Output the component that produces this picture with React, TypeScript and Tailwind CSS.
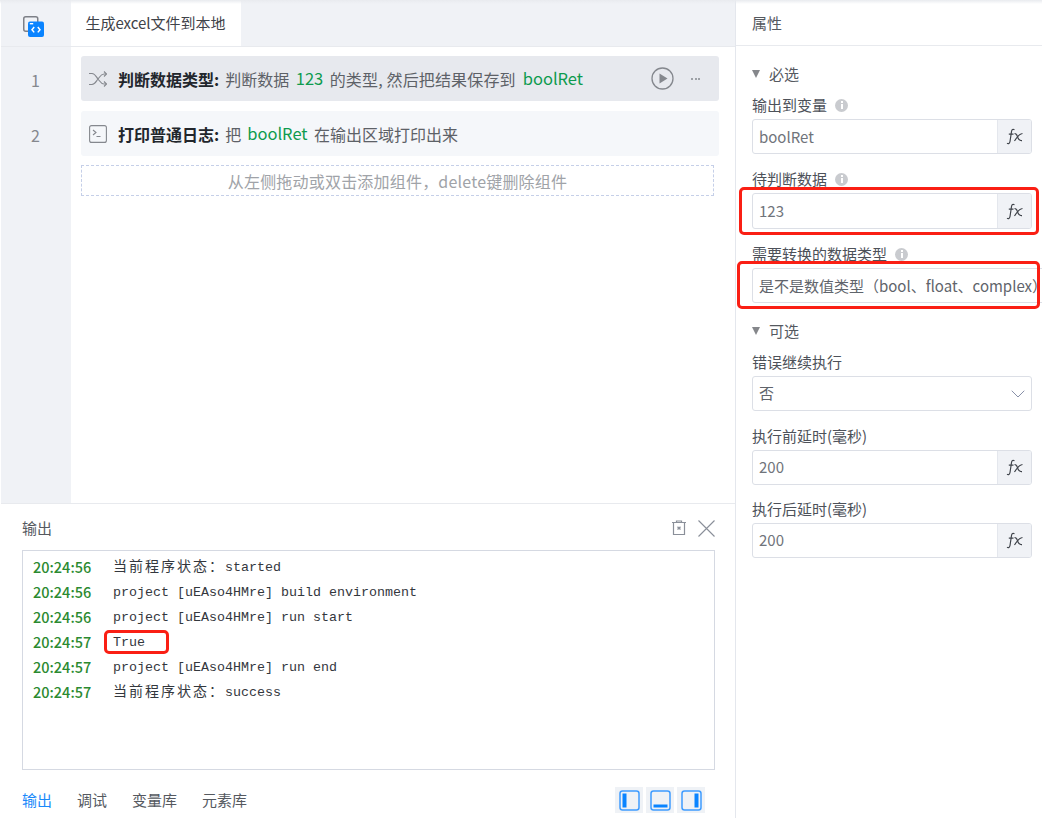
import React from "react";
import { ChevronDown } from "lucide-react";

const ui = { fontFamily: '"Noto Sans CJK SC", "Noto Sans", sans-serif' };

function Fx() {
  return (
    <div className="flex w-[34px] shrink-0 items-center justify-center self-stretch border-l border-[#e4e7ed] bg-[#f0f2f6] text-[#3f434a]">
      <svg width="18" height="17" viewBox="0 0 18 17" fill="none" stroke="currentColor" strokeWidth="1.200">
        <path d="M8.500 1.800C7 .9 5.900 1.500 5.500 3.500L4 13.500c-.4 2-1.500 2.600-3 1.800" />
        <path d="M2.800 6.200h4.700" />
        <path d="M8.500 5.500c2 0 2.400 1 3 3.200.7 2.500 1.500 4.300 4.500 3.900" />
        <path d="M16.500 5.500c-2.500.2-5.500 3.500-8 7.500" />
      </svg>
    </div>
  );
}

function Info() {
  return (
    <span className="ml-[8px] flex h-[13px] w-[13px] flex-col items-center justify-center gap-px rounded-full bg-[#c9cbcf]">
      <span className="h-[2px] w-[2px] bg-white" />
      <span className="h-[5px] w-[2px] bg-white" />
    </span>
  );
}

function Label({ text, info, className = "" }: { text: string; info?: boolean; className?: string }) {
  return (
    <div className={"flex h-[20px] items-center text-[15px] leading-[20px] text-[#4d5159] " + className}>
      {text}
      {info && <Info />}
    </div>
  );
}

function Field({ value, h = "h-[35px]", nudge = "" }: { value: string; h?: string; nudge?: string }) {
  return (
    <div className={"mr-[10px] mt-[4px] flex items-center overflow-hidden rounded-[3px] border border-[#dcdfe6] bg-white " + h}>
      <div className={"flex-1 pl-[6px] text-[15px] text-[#70747b] " + nudge}>{value}</div>
      <Fx />
    </div>
  );
}

function Section({ text }: { text: string }) {
  return (
    <div className="flex h-[20px] items-center text-[15px] text-[#55595f]">
      <span className="mr-[9px] h-0 w-0 border-x-[4.500px] border-t-[8px] border-x-transparent border-t-[#85878b]" />
      {text}
    </div>
  );
}

function Red({ className }: { className: string }) {
  return <div className={"pointer-events-none absolute rounded-[5px] border-[3px] border-[#fa1f14] " + className} />;
}

function Cjk({ children }: { children: React.ReactNode }) {
  return <span className="text-[14px] leading-[14px] tracking-[2px]" style={{ fontFamily: '"Noto Sans CJK SC", serif' }}>{children}</span>;
}

const logs: [string, React.ReactNode][] = [
  ["20:24:56", <><Cjk>当前程序状态：</Cjk>started</>],
  ["20:24:56", "project [uEAso4HMre] build environment"],
  ["20:24:56", "project [uEAso4HMre] run start"],
  ["20:24:57", "True"],
  ["20:24:57", "project [uEAso4HMre] run end"],
  ["20:24:57", <><Cjk>当前程序状态：</Cjk>success</>],
];

function Pane({ kind }: { kind: "l" | "b" | "r" }) {
  return (
    <div className="flex h-[26px] w-[28px] items-center justify-center bg-[#eff2f6]">
      <svg width="21" height="21" viewBox="0 0 21 21" fill="none">
        <rect x="1" y="1" width="19" height="19" rx="2.500" stroke="#3f9cff" strokeWidth="1.500" />
        {kind === "l" && <rect x="3.500" y="3.500" width="4" height="14" fill="#0a84ff" />}
        {kind === "b" && <rect x="3.500" y="14.500" width="14" height="3" fill="#0a84ff" />}
        {kind === "r" && <rect x="13.500" y="3.500" width="4" height="14" fill="#0a84ff" />}
      </svg>
    </div>
  );
}

export default function App() {
  return (
    <div className="relative flex h-[818px] w-[1042px] overflow-hidden bg-white" style={ui}>
      <div className="flex w-[735px] shrink-0 flex-col pl-px">
        <div className="flex h-[504px] shrink-0 flex-col border-b border-[#e8eaee]">
          <div className="flex h-[47px] shrink-0 border-b border-[#e8eaee] bg-[#f0f2f6]">
            <div className="flex w-[70px] items-start pl-[22px] pt-[16px]">
              <svg width="22" height="22" viewBox="0 0 22 22" fill="none">
                <rect x="0.750" y="0.750" width="14" height="14.500" rx="2" stroke="#7d8087" strokeWidth="1.500" />
                <rect x="5" y="5.500" width="16" height="15.500" rx="2" fill="#0a84ff" />
                <path d="M11.200 11 9 13.700l2.200 2.700M14.800 11l2.200 2.700-2.200 2.700" stroke="#fff" strokeWidth="1.500" />
                <rect x="6.800" y="7" width="3.400" height="1.400" fill="#fff" />
              </svg>
            </div>
            <div className="flex w-[170px] items-center justify-center bg-white pr-[1px] text-[15px] text-[#3f4349]">生成excel文件到本地</div>
          </div>
          <div className="flex flex-1">
            <div className="flex w-[70px] flex-col items-center bg-[#f0f2f6] pr-[1px] pt-[9px] text-[16px] text-[#85888e]">
              <div className="flex h-[45px] items-center pt-[3px]">1</div>
              <div className="mt-[10px] flex h-[45px] items-center pt-[3px]">2</div>
            </div>
            <div className="flex-1 pl-[10px] pr-[16px] pt-[9px] text-[16px]">
              <div className="flex h-[45px] items-center rounded-[3px] bg-[#e7e9ee] pl-[8px] text-[#5d6167]">
                <svg width="18" height="16" viewBox="0 0 18 16" fill="none" stroke="#85888e" strokeWidth="1.100">
                  <path d="M0 2.500h3c3 0 4 3 6 5.500s3 5 6 5h2.500M0 13.500h3c3 0 4-3 6-5.500s3-5 6-5h2.500" />
                  <path d="m15 0.500 2.500 2.500-2.500 2.500M15 10.500l2.500 2.500-2.500 2.500" />
                </svg>
                <b className="ml-[11px] mr-[6px] font-bold text-[#22262c]">判断数据类型:</b>
                判断数据
                <span className="mx-[6.500px] text-[16.500px] text-[#0e9b4e]">123</span>
                <span className="tracking-[0.150px]">的类型, 然后把结果保存到</span>
                <span className="ml-[7px] text-[16.500px] text-[#0e9b4e]">boolRet</span>
                <div className="ml-auto mr-[19px] flex items-center gap-[17px]">
                  <svg width="23" height="23" viewBox="0 0 23 23" fill="none">
                    <circle cx="11.500" cy="11.500" r="10.500" stroke="#85888e" strokeWidth="1.300" />
                    <path d="M8.500 6.500v10l8-5z" fill="#85888e" />
                  </svg>
                  <span className="flex gap-[1.500px]">
                    <i className="h-[2px] w-[2px] rounded-full bg-[#85888e]" />
                    <i className="h-[2px] w-[2px] rounded-full bg-[#85888e]" />
                    <i className="h-[2px] w-[2px] rounded-full bg-[#85888e]" />
                  </span>
                </div>
              </div>
              <div className="mt-[10px] flex h-[45px] items-center rounded-[3px] bg-[#f5f7fa] pl-[8px] text-[#5d6167]">
                <svg width="18" height="18" viewBox="0 0 18 18" fill="none" stroke="#85888e" strokeWidth="1.100">
                  <rect x="0.600" y="0.600" width="16.800" height="16.800" rx="2" />
                  <path d="m4 5 3 2.500L4 10M7.500 11.500h4" />
                </svg>
                <b className="ml-[11px] mr-[6px] font-bold text-[#22262c]">打印普通日志:</b>
                把
                <span className="ml-[6px] mr-[6.500px] text-[16.500px] text-[#0e9b4e]">boolRet</span>
                在输出区域打印出来
              </div>
              <div className="mr-[5px] mt-[9px] flex h-[31px] items-center justify-center border border-dashed border-[#c5cfe8] text-[16px] tracking-[0.200px] text-[#a0a3a8]">从左侧拖动或双击添加组件，delete键删除组件</div>
            </div>
          </div>
        </div>
        <div className="flex flex-1 flex-col pl-[21px] pr-[20px]">
          <div className="flex h-[46px] shrink-0 items-center pt-[2px] text-[15px] text-[#55595f]">
            输出
            <div className="ml-auto flex items-center gap-[11px]">
              <svg width="16" height="16" viewBox="0 0 16 16" fill="none" stroke="#8a8f99" strokeWidth="1.200">
                <path d="M1 2.500h14M2.500 3v11.500h11V3M5.500 2.500V1h5v1.500" />
                <path d="m6.500 6.800 3 2.800m0-2.800-3 2.800" strokeWidth="1.300" />
              </svg>
              <svg width="17" height="17" viewBox="0 0 17 17" fill="none" stroke="#8a8f99" strokeWidth="1.100">
                <path d="M.5.500l16 16M16.500.500l-16 16" />
              </svg>
            </div>
          </div>
          <div className="h-[220px] shrink-0 border border-[#d5d9e2] pl-[10px] pt-[4px]">
            {logs.map(([t, m], i) => (
              <div key={i} className="flex h-[25px] items-center">
                <span className="w-[80px] shrink-0 pb-[2px] text-[14.500px] font-medium text-[#2b8a30]">{t}</span>
                <span className="text-[13.330px] text-[#33373d]" style={{ fontFamily: '"Liberation Mono", monospace' }}>{m}</span>
              </div>
            ))}
          </div>
          <div className="flex flex-1 items-center pt-[12px] text-[15px] text-[#55595f]">
            <span className="text-[#1989fa]">输出</span>
            <span className="ml-[25px]">调试</span>
            <span className="ml-[25px]">变量库</span>
            <span className="ml-[25px]">元素库</span>
            <div className="ml-auto mr-[10px] flex gap-[3px]">
              <Pane kind="l" />
              <Pane kind="b" />
              <Pane kind="r" />
            </div>
          </div>
        </div>
      </div>
      <div className="flex min-w-0 flex-1 flex-col border-l border-[#e4e7ed]">
        <div className="flex h-[46px] shrink-0 items-center border-b border-[#e8eaee] pl-[16px] pt-[2px] text-[15px] text-[#55595f]">属性</div>
        <div className="pl-[16px] pt-[18px]">
          <Section text="必选" />
          <Label text="输出到变量" info className="mt-[11px]" />
          <Field value="boolRet" nudge="pt-[2px]" />
          <Label text="待判断数据" info className="mt-[15px]" />
          <Field value="123" h="h-[36px]" />
          <Label text="需要转换的数据类型" info className="mt-[15px]" />
          <div className="mt-[4px] flex h-[35px] w-[300px] items-center overflow-hidden whitespace-nowrap rounded-[3px] border border-[#dcdfe6] pl-[6px] pt-[2px] text-[15px] text-[#60646b]">是不是数值类型（bool、float、complex）</div>
          <div className="mt-[18px]"><Section text="可选" /></div>
          <Label text="错误继续执行" className="mt-[11px]" />
          <div className="mr-[10px] mt-[4px] flex h-[35px] items-center rounded-[3px] border border-[#dcdfe6] px-[6px] text-[15px] text-[#60646b]">
            否
            <ChevronDown size={24} strokeWidth={1} color="#8890a8" className="ml-auto -mr-[5px]" />
          </div>
          <Label text="执行前延时(毫秒)" className="mt-[15px]" />
          <Field value="200" />
          <Label text="执行后延时(毫秒)" className="mt-[14px]" />
          <Field value="200" />
        </div>
      </div>
      <div className="pointer-events-none absolute inset-x-0 top-0 h-[4px] bg-gradient-to-b from-[#e9ebef] to-transparent" />
      <Red className="left-[739px] top-[187px] h-[48px] w-[300px]" />
      <Red className="left-[737px] top-[261px] h-[48px] w-[303px]" />
      <Red className="left-[104px] top-[630px] h-[24px] w-[65px]" />
    </div>
  );
}
